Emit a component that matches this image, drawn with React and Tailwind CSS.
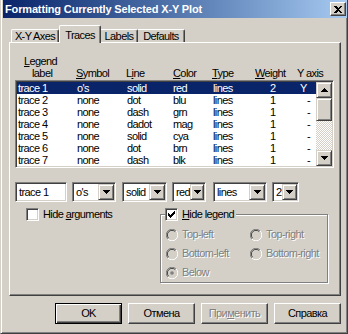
import React from "react";

const rows = [
  ["trace 1", "o's", "solid", "red", "lines", "2", "Y"],
  ["trace 2", "none", "dot", "blu", "lines", "1", "-"],
  ["trace 3", "none", "dash", "grn", "lines", "1", "-"],
  ["trace 4", "none", "dadot", "mag", "lines", "1", "-"],
  ["trace 5", "none", "solid", "cya", "lines", "1", "-"],
  ["trace 6", "none", "dot", "brn", "lines", "1", "-"],
  ["trace 7", "none", "dash", "blk", "lines", "1", "-"],
];

const sunken =
  "border border-t-[#808080] border-l-[#808080] border-b-white border-r-white shadow-[inset_1px_1px_0_#404040,inset_-1px_-1px_0_#d4d0c8]";
const bevel =
  "bg-[#d4d0c8] border border-t-[#d4d0c8] border-l-[#d4d0c8] border-b-[#404040] border-r-[#404040] shadow-[inset_1px_1px_0_#fff,inset_-1px_-1px_0_#808080]";
const disabled = "text-[#808080] [text-shadow:1px_1px_0_#fff]";

function Arrow({ up }) {
  return (
    <svg
      width="7"
      height="4"
      viewBox="0 0 7 4"
      shapeRendering="crispEdges"
      className={up ? "rotate-180" : ""}
    >
      <path d="M0 0h7v1h-1v1h-1v1h-1v1h-1v-1h-1v-1h-1v-1h-1z" fill="#000" />
    </svg>
  );
}

function Check({ checked }) {
  return (
    <span className={`w-[13px] h-[13px] bg-white flex items-center justify-center shrink-0 ${sunken}`}>
      {checked && (
        <svg width="7" height="7" viewBox="0 0 7 7" shapeRendering="crispEdges">
          <path d="M0 2h1v1h1v1h1v-1h1v-1h1v-1h1v-1h1v3h-1v1h-1v1h-1v1h-1v1h-1v-1h-1v-1h-1v-1h-1z" fill="#000" />
        </svg>
      )}
    </span>
  );
}

function Radio({ on }) {
  return (
    <svg width="12" height="12" viewBox="0 0 12 12" className="shrink-0">
      <circle cx="6" cy="6" r="5" fill="#d4d0c8" />
      <path d="M1.9 10.1A5.6 5.6 0 0 1 10.1 1.9" stroke="#808080" fill="none" />
      <path d="M10.1 1.9A5.6 5.6 0 0 1 1.9 10.1" stroke="#fff" fill="none" />
      <path d="M2.7 9.3A4.6 4.6 0 0 1 9.3 2.7" stroke="#404040" fill="none" />
      <path d="M9.3 2.7A4.6 4.6 0 0 1 2.7 9.3" stroke="#d4d0c8" fill="none" />
      {on && <circle cx="6" cy="6" r="1.8" fill="#808080" />}
    </svg>
  );
}

function Combo({ className, value }) {
  return (
    <div className={`h-[20px] p-[1px] bg-white flex items-center ${sunken} ${className}`}>
      <span className="flex-1 pl-[2px] leading-[16px]">{value}</span>
      <span className={`w-[16px] h-[16px] flex items-center justify-center ${bevel}`}>
        <Arrow />
      </span>
    </div>
  );
}

function RadioItem({ label, on, className }) {
  return (
    <div className={`flex items-center gap-[4px] h-[13px] ${className}`}>
      <Radio on={on} />
      <span className={disabled}>{label}</span>
    </div>
  );
}

export default function App() {
  return (
    <div className="w-[348px] h-[334px] bg-[#d4d0c8] border-l border-l-[#d4d0c8] border-r border-r-[#404040] border-b border-b-[#404040] shadow-[inset_1px_0_0_#fff,inset_-1px_-1px_0_#808080] font-['Liberation_Sans',Arial,sans-serif] text-[11px] tracking-[-0.6px] text-black overflow-hidden">
      {/* title bar */}
      <div className="ml-[2px] h-[18px] flex items-center bg-gradient-to-r from-[#0a246a] to-[#a6caf0]">
        <span className="pl-[2px] font-bold text-white tracking-[-0.15px]">
          Formatting Currently Selected X-Y Plot
        </span>
        <span className="ml-auto mr-[1px] w-[16px] h-[14px] flex items-center justify-center border border-t-white border-l-white border-b-[#404040] border-r-[#404040] bg-[#d4d0c8] shadow-[inset_-1px_-1px_0_#808080]">
          <svg width="8" height="7" viewBox="0 0 8 7" shapeRendering="crispEdges">
            <path d="M0 0h2l2 2 2-2h2L5 3.5 8 7H6L4 5 2 7H0l3-3.5z" fill="#000" />
          </svg>
        </span>
      </div>

      {/* tabs */}
      <div className="ml-[10px] h-[24px] flex items-end">
        <div className="w-[48px] h-[13px] flex justify-center leading-[13px] border-t border-l border-t-white border-l-white border-r border-r-[#404040] shadow-[inset_-1px_0_0_#808080] rounded-t-[2px]">
          X-Y Axes
        </div>
        <div className="relative z-10 w-[42px] h-[18px] -mb-px flex justify-center pt-[3px] leading-[13px] bg-[#d4d0c8] border-t border-l border-t-white border-l-white border-r border-r-[#404040] shadow-[inset_-1px_0_0_#808080] rounded-t-[2px]">
          Traces
        </div>
        <div className="w-[37px] h-[13px] flex justify-center leading-[13px] border-t border-t-white border-r border-r-[#404040] shadow-[inset_-1px_0_0_#808080] rounded-tr-[2px]">
          Labels
        </div>
        <div className="w-[47px] h-[13px] flex justify-center leading-[13px] border-t border-t-white border-r border-r-[#404040] shadow-[inset_-1px_0_0_#808080] rounded-tr-[2px]">
          Defaults
        </div>
      </div>

      {/* tab panel */}
      <div className="ml-[8px] w-[332px] h-[254px] border border-t-white border-l-white border-r-[#404040] border-b-[#404040] shadow-[inset_-1px_-1px_0_#808080] pl-[5px] pt-[12px]">
        <div className="ml-[9px] h-[12px] leading-[13px]">
          <u>L</u>egend
        </div>
        <div className="flex h-[13px] leading-[13px] pl-[2px]">
          <span className="w-[59px] pl-[15px]">label</span>
          <span className="w-[50px]">
            <u>S</u>ymbol
          </span>
          <span className="w-[46px]">
            L<u>i</u>ne
          </span>
          <span className="w-[40px] pl-[1px]">
            <u>C</u>olor
          </span>
          <span className="w-[43px]">
            <u>T</u>ype
          </span>
          <span className="w-[42px]">
            <u>W</u>eight
          </span>
          <span>Y axis</span>
        </div>

        {/* list */}
        <div className={`w-[319px] h-[88px] bg-white flex p-[1px] ${sunken}`}>
          <div className="flex-1">
            {rows.map((r, i) => (
              <div
                key={r[0]}
                className={`flex h-[12px] leading-[12px] pl-[1px] ${i === 0 ? "bg-[#0a246a] text-white" : ""}`}
              >
                <span className="w-[59px]">{r[0]}</span>
                <span className="w-[50px]">{r[1]}</span>
                <span className="w-[46px]">{r[2]}</span>
                <span className="w-[40px]">{r[3]}</span>
                <span className="w-[43px]">{r[4]}</span>
                <span className="w-[42px] pl-[14px]">{r[5]}</span>
                <span className={r[6] === "Y" ? "pl-[2px]" : "pl-[9px]"}>{r[6]}</span>
              </div>
            ))}
          </div>
          <div className="w-[16px] flex flex-col">
            <span className={`w-[16px] h-[16px] flex items-center justify-center ${bevel}`}>
              <Arrow up />
            </span>
            <span className={`w-[16px] h-[23px] ${bevel}`} />
            <span className="flex-1 bg-[image:repeating-conic-gradient(#fff_0_25%,#d4d0c8_0_50%)] bg-[length:2px_2px]" />
            <span className={`w-[16px] h-[16px] flex items-center justify-center ${bevel}`}>
              <Arrow />
            </span>
          </div>
        </div>

        {/* edit row */}
        <div className="flex mt-[14px]">
          <div className={`w-[52px] h-[20px] bg-white p-[1px] pl-[3px] leading-[16px] ${sunken}`}>trace 1</div>
          <Combo className="w-[44px] ml-[5px]" value="o's" />
          <Combo className="w-[45px] ml-[6px]" value="solid" />
          <Combo className="w-[34px] ml-[5px]" value="red" />
          <Combo className="w-[54px] ml-[7px]" value="lines" />
          <Combo className="w-[27px] ml-[5px]" value="2" />
        </div>

        {/* options */}
        <div className="flex mt-[6px]">
          <div className="w-[145px]">
            <div className="ml-[11px] flex items-center gap-[4px] h-[13px]">
              <Check />
              <span>
                Hide <u>a</u>rguments
              </span>
            </div>
          </div>
          <fieldset className="w-[168px] border border-[#808080] shadow-[inset_1px_1px_0_#fff,1px_1px_0_#fff] px-[4px] pb-[3px]">
            <legend className="flex items-center gap-[4px] h-[13px] bg-[#d4d0c8] pr-[2px]">
              <Check checked />
              <span>
                <u>H</u>ide legend
              </span>
            </legend>
            <div className="flex flex-col gap-[6px] mt-[7px] pl-[1px]">
              <div className="flex">
                <RadioItem label="Top-left" className="w-[84px]" />
                <RadioItem label="Top-right" />
              </div>
              <div className="flex">
                <RadioItem label="Bottom-left" className="w-[84px]" />
                <RadioItem label="Bottom-right" />
              </div>
              <RadioItem label="Below" on />
            </div>
          </fieldset>
        </div>
      </div>

      {/* buttons */}
      <div className="flex justify-end gap-[6px] mt-[7px] pr-[6px]">
        <button className="w-[67px] h-[21px] border border-black shadow-[inset_1px_1px_0_#fff,inset_-1px_-1px_0_#404040,inset_-2px_-2px_0_#808080]">
          OK
        </button>
        <button className="w-[67px] h-[21px] border border-t-white border-l-white border-b-[#404040] border-r-[#404040] shadow-[inset_-1px_-1px_0_#808080]">
          Отмена
        </button>
        <button className={`w-[67px] h-[21px] border border-t-white border-l-white border-b-[#404040] border-r-[#404040] shadow-[inset_-1px_-1px_0_#808080,inset_1px_1px_0_#d4d0c8] ${disabled}`}>
          При<u>м</u>енить
        </button>
        <button className="w-[67px] h-[21px] border border-t-white border-l-white border-b-[#404040] border-r-[#404040] shadow-[inset_-1px_-1px_0_#808080]">
          Справка
        </button>
      </div>
    </div>
  );
}
